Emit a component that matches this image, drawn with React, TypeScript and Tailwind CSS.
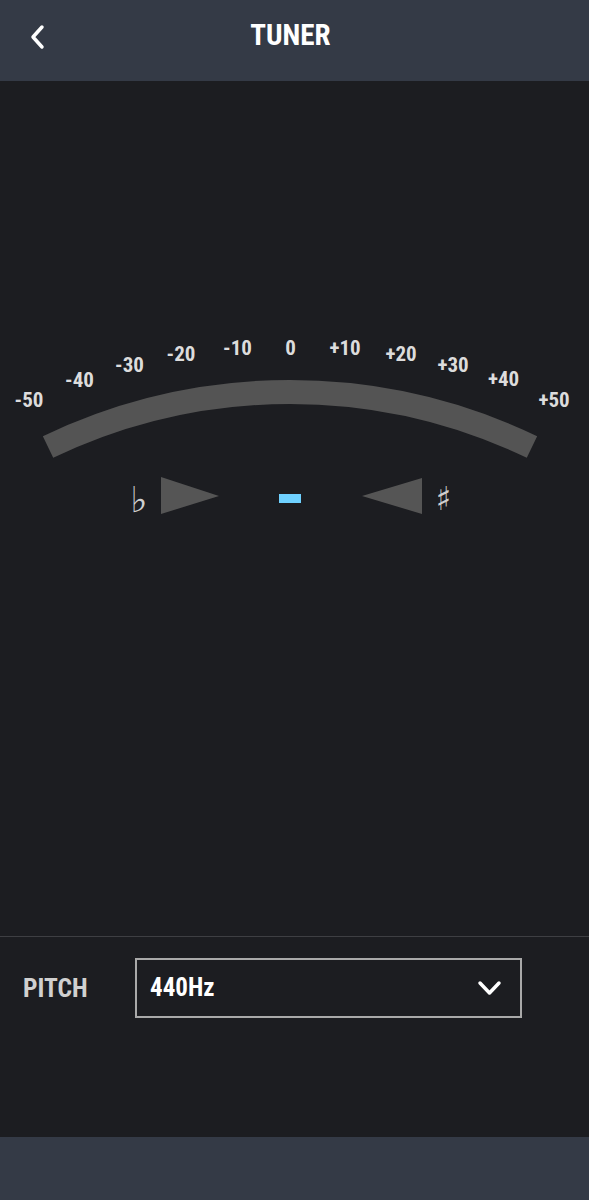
const font = {fontFamily: "'Roboto Condensed', 'Liberation Sans Narrow', Roboto, sans-serif"};

// label positions along the arc (x center, baseline y), in svg coords (page y - 330)
const ticks = [
  {t: "-50", x: 29, y: 77},
  {t: "-40", x: 79.5, y: 57},
  {t: "-30", x: 129.5, y: 42},
  {t: "-20", x: 181, y: 31},
  {t: "-10", x: 237.5, y: 25},
  {t: "0", x: 290.5, y: 25},
  {t: "+10", x: 345, y: 25},
  {t: "+20", x: 401, y: 31},
  {t: "+30", x: 453, y: 42},
  {t: "+40", x: 503.5, y: 56},
  {t: "+50", x: 554, y: 77},
];

const Gauge = () => {
  const cx = 290, cy = 622, r = 560, a = 25.6 * Math.PI / 180;
  const x1 = cx - r * Math.sin(a), y1 = cy - r * Math.cos(a);
  const x2 = cx + r * Math.sin(a), y2 = y1;
  return (
    <svg width="589" height="200" viewBox="0 0 589 200" className="block">
      {ticks.map(k => (
        <text key={k.t} x={k.x} y={k.y} textAnchor="middle" fill="#dcdcdc" fontSize="21" fontWeight="700" style={font}>
          {k.t}
        </text>
      ))}
      <path d={`M ${x1} ${y1} A ${r} ${r} 0 0 1 ${x2} ${y2}`} stroke="#545454" strokeWidth="24" fill="none" />
      <text x="139" y="182" textAnchor="middle" fill="#cfcfcf" fontSize="36" style={{fontFamily: "'DejaVu Sans', sans-serif"}}>♭</text>
      <polygon points="161,147 161,184 219,166" fill="#555555" />
      <rect x="279" y="164" width="22" height="9" fill="#6fd1ff" />
      <polygon points="422,148 422,184 362,166" fill="#555555" />
      <text x="443.5" y="180" textAnchor="middle" fill="#cfcfcf" fontSize="33" style={{fontFamily: "'DejaVu Sans', sans-serif"}}>♯</text>
    </svg>
  );
};

export default function App() {
  return (
    <div className="w-[589px] h-[1200px] flex flex-col bg-[#1c1d21]" style={font}>
      <header className="h-[81px] shrink-0 bg-[#343a46] relative flex items-center justify-center">
        <button className="absolute left-[28px] top-[24px]">
          <svg width="18" height="26" viewBox="0 0 18 26">
            <polyline points="14,3 5,13 14,23" fill="none" stroke="#fff" strokeWidth="3.5" strokeLinecap="round" strokeLinejoin="round" />
          </svg>
        </button>
        <h1 className="text-white text-[29px] font-bold -mt-[9px] -ml-[8px]">TUNER</h1>
      </header>
      <main className="flex-1 flex flex-col">
        <div className="pt-[249px] h-[855px]">
          <Gauge />
        </div>
        <div className="border-t border-[#3e3f43] flex items-center gap-[46px] pl-[23px] pt-[21px]">
          <span className="text-[#d0d0d0] text-[25.5px] font-bold w-[66px]">PITCH</span>
          <div className="w-[387px] h-[60px] border-2 border-[#a9a9a9] flex items-center justify-between pl-[13px] pr-[17px]">
            <span className="text-white text-[25px] font-bold">440Hz</span>
            <svg width="27" height="18" viewBox="0 0 27 18">
              <polyline points="4,4 13.5,14 23,4" fill="none" stroke="#fff" strokeWidth="3.5" strokeLinecap="round" strokeLinejoin="round" />
            </svg>
          </div>
        </div>
      </main>
      <footer className="h-[63px] shrink-0 bg-[#343a46]" />
    </div>
  );
}
